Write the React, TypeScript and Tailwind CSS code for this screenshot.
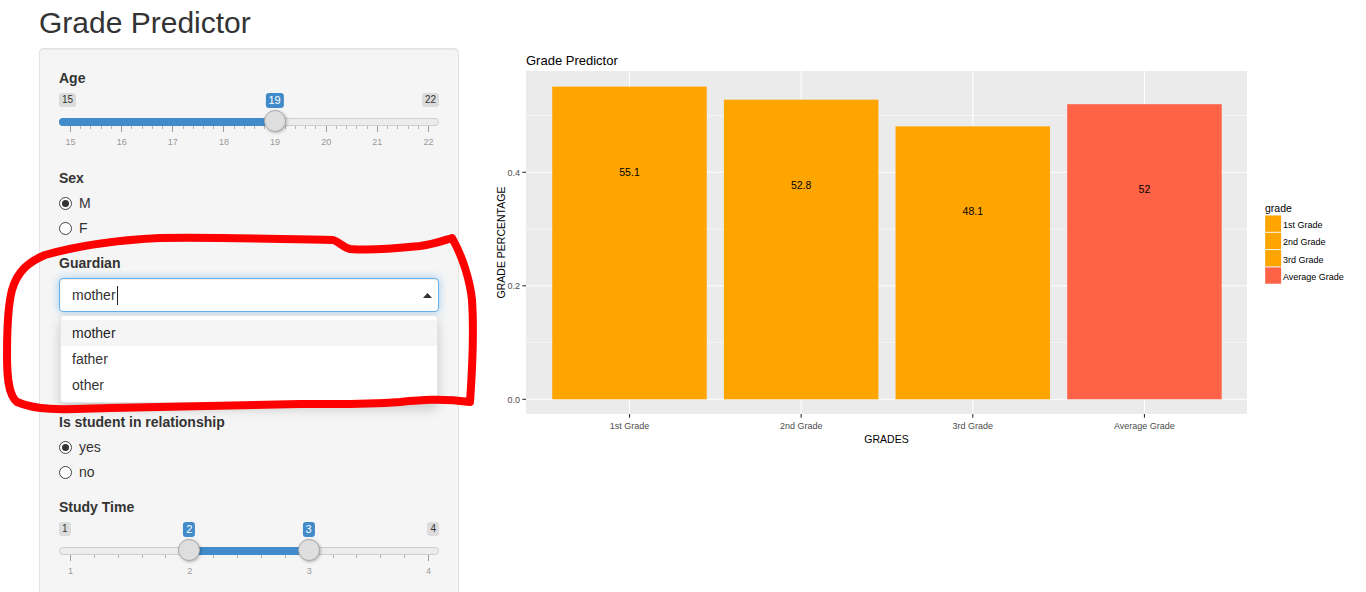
import React from 'react';

const FONT = '"Liberation Sans", Arial, Helvetica, sans-serif';

// ion.rangeSlider look-alike (shiny skin)
function RangeSlider({ min, max, from, to }: { min: number; max: number; from: number; to?: number }) {
  const W = 380;
  const pad = 11;
  const span = W - pad * 2;
  const pos = (v: number) => pad + ((v - min) / (max - min)) * span;

  const ticks: { x: number; major: boolean }[] = [];
  const steps = (max - min) * 5;
  for (let i = 0; i <= steps; i++) {
    ticks.push({ x: pad + (i / steps) * span, major: i % 5 === 0 });
  }
  const nums: number[] = [];
  for (let v = min; v <= max; v++) nums.push(v);

  const isRange = to !== undefined;
  const barLeft = isRange ? pos(from) : 0;
  const barRight = isRange ? pos(to as number) : pos(from);
  const handles = isRange ? [from, to as number] : [from];

  return (
    <div className="relative mt-[5px] h-[60px] w-[380px]">
      <span className="absolute left-0 top-0 rounded-[3px] bg-black/10 px-[3px] py-[1px] text-[10px] leading-[12px] text-[#333]">
        {min}
      </span>
      <span className="absolute right-0 top-0 rounded-[3px] bg-black/10 px-[3px] py-[1px] text-[10px] leading-[12px] text-[#333]">
        {max}
      </span>
      {handles.map((h) => (
        <span
          key={'l' + h}
          className="absolute top-0 -translate-x-1/2 rounded-[3px] bg-[#428bca] px-[3px] py-[1px] text-[11px] leading-[13px] text-white"
          style={{ left: pos(h) }}
        >
          {h}
        </span>
      ))}
      <div className="absolute left-0 right-0 top-[25px] h-[8px] rounded-full border border-[#cfcfcf] bg-[#ececec]" />
      <div
        className={`absolute top-[25px] h-[8px] bg-[#428bca] ${isRange ? '' : 'rounded-l-full'}`}
        style={{ left: barLeft, width: barRight - barLeft }}
      />
      {ticks.map((t, i) => (
        <div
          key={i}
          className={`absolute top-[33px] w-px ${t.major ? 'h-[6px] bg-[#9a9a9a]' : 'h-[3px] bg-[#b5b5b5]'}`}
          style={{ left: t.x }}
        />
      ))}
      {nums.map((n) => (
        <span
          key={n}
          className="absolute top-[44px] -translate-x-1/2 text-[9px] leading-[11px] text-[#999]"
          style={{ left: pos(n) + 0.5 }}
        >
          {n}
        </span>
      ))}
      {handles.map((h) => (
        <div
          key={'h' + h}
          className="absolute top-[17px] h-[22px] w-[22px] -translate-x-1/2 rounded-full border border-[#aaa] bg-[#dedede] shadow-[1px_1px_3px_rgba(0,0,0,0.25)]"
          style={{ left: pos(h) }}
        />
      ))}
    </div>
  );
}

function Radio({ checked, label }: { checked?: boolean; label: string }) {
  return (
    <label className="flex h-[20px] items-center gap-[7px] text-[14px] text-[#333]">
      <span className="flex h-[13px] w-[13px] items-center justify-center rounded-full border border-[#444] bg-white">
        {checked && <span className="h-[7px] w-[7px] rounded-full bg-[#333]" />}
      </span>
      <span>{label}</span>
    </label>
  );
}

function FieldLabel({ children, className = '' }: { children: React.ReactNode; className?: string }) {
  return <div className={`h-[20px] text-[14px] font-bold leading-[20px] text-[#333] ${className}`}>{children}</div>;
}

const bars = [
  { name: '1st Grade', v: 0.551, label: '55.1', color: '#FFA500' },
  { name: '2nd Grade', v: 0.528, label: '52.8', color: '#FFA500' },
  { name: '3rd Grade', v: 0.481, label: '48.1', color: '#FFA500' },
  { name: 'Average Grade', v: 0.52, label: '52', color: '#FF6347' },
];

function Chart() {
  const y = (v: number) => 399.3 - v * 567.5;
  const cx = (i: number) => 629.5 + i * 171.65;
  const bw = 154.5;
  const panel = { x0: 526, x1: 1247, y0: 71, y1: 414 };

  return (
    <svg width={886} height={420} viewBox="480 48 886 420" style={{ fontFamily: FONT }} className="block">
      <text x={526} y={65} fontSize={13} fill="#000">
        Grade Predictor
      </text>
      <rect x={panel.x0} y={panel.y0} width={panel.x1 - panel.x0} height={panel.y1 - panel.y0} fill="#EBEBEB" />
      {[0.1, 0.3, 0.5].map((v) => (
        <line key={v} x1={panel.x0} x2={panel.x1} y1={y(v)} y2={y(v)} stroke="#fff" strokeWidth={0.55} />
      ))}
      {[0, 0.2, 0.4].map((v) => (
        <line key={v} x1={panel.x0} x2={panel.x1} y1={y(v)} y2={y(v)} stroke="#fff" strokeWidth={1.1} />
      ))}
      {bars.map((b, i) => (
        <line key={b.name} x1={cx(i)} x2={cx(i)} y1={panel.y0} y2={panel.y1} stroke="#fff" strokeWidth={1.1} />
      ))}
      {bars.map((b, i) => (
        <g key={'b' + b.name}>
          <rect x={cx(i) - bw / 2} y={y(b.v)} width={bw} height={y(0) - y(b.v)} fill={b.color} />
          <text x={cx(i)} y={y(b.v - 0.15) + 3.8} fontSize={10.5} textAnchor="middle" fill="#000">
            {b.label}
          </text>
        </g>
      ))}
      {[0, 0.2, 0.4].map((v) => (
        <g key={'t' + v}>
          <line x1={522.3} x2={526} y1={y(v)} y2={y(v)} stroke="#333" strokeWidth={1.1} />
          <text x={520} y={y(v) + 3.2} fontSize={9} textAnchor="end" fill="#4D4D4D">
            {v.toFixed(1)}
          </text>
        </g>
      ))}
      {bars.map((b, i) => (
        <g key={'x' + b.name}>
          <line x1={cx(i)} x2={cx(i)} y1={414} y2={417.7} stroke="#333" strokeWidth={1.1} />
          <text x={cx(i)} y={429} fontSize={9} textAnchor="middle" fill="#4D4D4D">
            {b.name}
          </text>
        </g>
      ))}
      <text x={886.5} y={443} fontSize={10.5} textAnchor="middle" fill="#000">
        GRADES
      </text>
      <text x={505} y={242.5} fontSize={10.5} textAnchor="middle" fill="#000" transform="rotate(-90 505 242.5)">
        GRADE PERCENTAGE
      </text>

      <text x={1265} y={212} fontSize={10.5} fill="#000">
        grade
      </text>
      {bars.map((b, i) => {
        const top = 215 + i * 17.3;
        return (
          <g key={'lg' + b.name}>
            <rect x={1265} y={top} width={16.3} height={17.3} fill="#F2F2F2" />
            <rect x={1265.2} y={top + 0.5} width={15.9} height={16.3} fill={b.color} />
            <text x={1283} y={top + 13} fontSize={9} fill="#000">
              {b.name}
            </text>
          </g>
        );
      })}
    </svg>
  );
}

export default function App() {
  return (
    <div className="relative h-[592px] w-[1366px] overflow-hidden bg-white" style={{ fontFamily: FONT }}>
      <div className="h-[39px] pl-[39px] pt-[6px] text-[30px] leading-[33px] text-[#333]">Grade Predictor</div>

      <div className="mt-[9px] flex items-start pl-[39px]">
        <div className="w-[420px] rounded-[4px] border border-[#e3e3e3] bg-[#f5f5f5] px-[19px] pb-[40px] pt-[19px] shadow-[inset_0_1px_1px_rgba(0,0,0,0.05)]">
          <FieldLabel>Age</FieldLabel>
          <RangeSlider min={15} max={22} from={19} />

          <FieldLabel className="mt-[15px]">Sex</FieldLabel>
          <div className="mt-[5px] flex flex-col gap-[5px]">
            <Radio checked label="M" />
            <Radio label="F" />
          </div>

          <FieldLabel className="mt-[15px]">Guardian</FieldLabel>
          <div className="relative mt-[5px]">
            <div className="flex h-[34px] items-center rounded-[4px] border border-[#66afe9] bg-white pl-[12px] pr-[6px] text-[14px] text-[#333] shadow-[inset_0_1px_1px_rgba(0,0,0,0.075),0_0_8px_rgba(102,175,233,0.6)]">
              <span>mother</span>
              <span className="ml-px h-[19px] w-px bg-[#222]" />
              <svg className="ml-auto" width="9" height="5" viewBox="0 0 9 5">
                <polygon points="0,5 9,5 4.5,0" fill="#333" />
              </svg>
            </div>
            <div className="absolute left-[1px] right-[1px] top-[37px] z-10 rounded-[4px] border border-black/10 bg-white py-[4px] shadow-[0_6px_12px_rgba(0,0,0,0.175)]">
              {['mother', 'father', 'other'].map((o, i) => (
                <div
                  key={o}
                  className={`px-[11px] py-[3px] text-[14px] leading-[20px] ${i === 0 ? 'bg-[#f5f5f5] text-[#262626]' : 'text-[#333]'}`}
                >
                  {o}
                </div>
              ))}
            </div>
          </div>

          <FieldLabel className="mt-[100px]">Is student in relationship</FieldLabel>
          <div className="mt-[5px] flex flex-col gap-[5px]">
            <Radio checked label="yes" />
            <Radio label="no" />
          </div>

          <FieldLabel className="mt-[15px]">Study Time</FieldLabel>
          <RangeSlider min={1} max={4} from={2} to={3} />
        </div>

        <div className="ml-[21px]">
          <Chart />
        </div>
      </div>

      {/* hand-drawn annotation over the screenshot */}
      <svg className="pointer-events-none absolute inset-0 z-20" width={1366} height={592} viewBox="0 0 1366 592">
        <path
          d="M 452 238 C 462 255 470 280 472 300 C 474 330 473 360 470 402 C 440 398 420 400 400 402 C 360 405 330 404 300 404 C 240 405 180 407 110 408 C 70 409 40 412 17 402 C 8 395 7 375 7 355 C 7 330 8 305 12 290 C 17 272 28 262 45 255 C 80 245 120 240 160 238 C 220 237 270 239 333 240 C 340 242 342 247 350 249 C 375 251 400 248 420 246 C 435 244 445 240 452 238 Z"
          fill="none"
          stroke="#f00"
          strokeWidth={8}
          strokeLinecap="round"
          strokeLinejoin="round"
        />
      </svg>
    </div>
  );
}
